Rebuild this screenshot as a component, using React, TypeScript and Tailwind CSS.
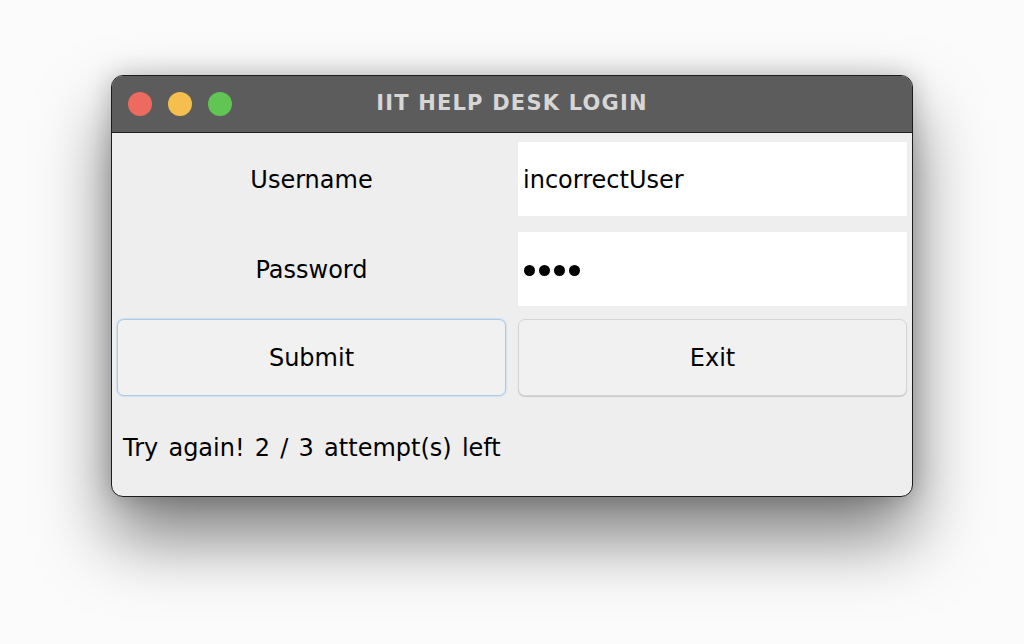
import React from 'react';

const TrafficLights = () => (
  <div className="flex items-center gap-[16px]">
    <span className="block w-[24px] h-[24px] rounded-full bg-[#ed6a5e]" />
    <span className="block w-[24px] h-[24px] rounded-full bg-[#f5bf4f]" />
    <span className="block w-[24px] h-[24px] rounded-full bg-[#61c554]" />
  </div>
);

const App: React.FC = () => {
  return (
    <div className="w-[1024px] h-[644px] bg-[#fbfbfb] flex justify-center pt-[75px] overflow-hidden font-['DejaVu_Sans',sans-serif]">
      <div className="w-[802px] h-[422px] flex flex-col rounded-[12px] border border-[#1c1c1c] bg-[#eeeeee] overflow-hidden shadow-[0_40px_70px_rgba(0,0,0,0.5),0_0_26px_rgba(0,0,0,0.22)]">
        {/* title bar */}
        <div className="relative h-[57px] shrink-0 flex items-center pl-[16px] bg-[#5c5c5c] border-b border-[#1e1e1e]">
          <TrafficLights />
          <div className="absolute inset-0 flex items-center justify-center pointer-events-none">
            <span className="font-bold text-[21px] tracking-[1.2px] text-[#d6d6d6]">IIT HELP DESK LOGIN</span>
          </div>
        </div>

        {/* form */}
        <div className="flex flex-col px-[5px] pt-[9px] text-[24px] text-black">
          <div className="grid grid-cols-2 gap-x-[12px] h-[74px]">
            <div className="flex items-center justify-center pt-[1px]">Username</div>
            <div className="bg-white flex items-center pl-[5px] pt-[1px]">incorrectUser</div>
          </div>
          <div className="grid grid-cols-2 gap-x-[12px] h-[74px] mt-[16px]">
            <div className="flex items-center justify-center pt-[1px]">Password</div>
            <div className="bg-white flex items-center gap-[4px] pl-[6px] pt-[2px]">
              <span className="block w-[11px] h-[11px] rounded-full bg-black" />
              <span className="block w-[11px] h-[11px] rounded-full bg-black" />
              <span className="block w-[11px] h-[11px] rounded-full bg-black" />
              <span className="block w-[11px] h-[11px] rounded-full bg-black" />
            </div>
          </div>
          <div className="grid grid-cols-2 gap-x-[12px] h-[77px] mt-[13px]">
            <button className="rounded-[7px] bg-[#f1f1f1] border border-[#a9cbe7] shadow-[0_0_1px_1px_rgba(160,200,235,0.35)]">
              Submit
            </button>
            <button className="rounded-[7px] bg-[#f1f1f1] border border-[#d4d4d4] shadow-[0_1px_1px_rgba(0,0,0,0.15)]">
              Exit
            </button>
          </div>
        </div>

        <div className="flex-1 flex items-center pl-[11px] pt-[4px] text-[24px] text-black [word-spacing:2.6px]">
          Try again! 2 / 3 attempt(s) left
        </div>
      </div>
    </div>
  );
};

export default App;
